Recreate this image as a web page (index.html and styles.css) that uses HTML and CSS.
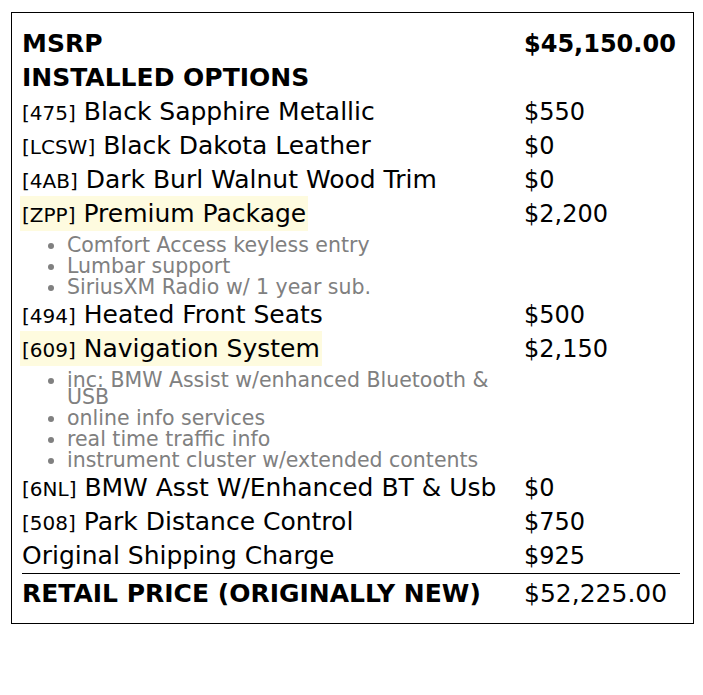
FILE: index.html
```html
<!DOCTYPE html>
<html>
<head>
<meta charset="utf-8">
<link rel="stylesheet" href="styles.css">
</head>
<body>
<div class="sticker">
  <div class="row head"><span class="name">MSRP</span><span class="price">$45,150.00</span></div>
  <div class="row head"><span class="name">INSTALLED OPTIONS</span><span class="price"></span></div>
  <div class="row"><span class="name"><span class="code">[475]</span> Black Sapphire Metallic</span><span class="price">$550</span></div>
  <div class="row"><span class="name"><span class="code">[LCSW]</span> Black Dakota Leather</span><span class="price">$0</span></div>
  <div class="row"><span class="name"><span class="code">[4AB]</span> Dark Burl Walnut Wood Trim</span><span class="price">$0</span></div>
  <div class="row"><span class="name"><span class="hl"><span class="code">[ZPP]</span> Premium Package</span></span><span class="price">$2,200</span></div>
  <ul class="details">
    <li>Comfort Access keyless entry</li>
    <li>Lumbar support</li>
    <li>SiriusXM Radio w/ 1 year sub.</li>
  </ul>
  <div class="row"><span class="name"><span class="code">[494]</span> Heated Front Seats</span><span class="price">$500</span></div>
  <div class="row"><span class="name"><span class="hl"><span class="code">[609]</span> Navigation System</span></span><span class="price">$2,150</span></div>
  <ul class="details">
    <li>inc: BMW Assist w/enhanced Bluetooth &amp; USB</li>
    <li>online info services</li>
    <li>real time traffic info</li>
    <li>instrument cluster w/extended contents</li>
  </ul>
  <div class="row"><span class="name"><span class="code">[6NL]</span> BMW Asst W/Enhanced BT &amp; Usb</span><span class="price">$0</span></div>
  <div class="row"><span class="name"><span class="code">[508]</span> Park Distance Control</span><span class="price">$750</span></div>
  <div class="row"><span class="name">Original Shipping Charge</span><span class="price">$925</span></div>
  <div class="row total"><span class="name">RETAIL PRICE (ORIGINALLY NEW)</span><span class="price">$52,225.00</span></div>
</div>
</body>
</html>
```
FILE: styles.css
```css
html, body {
  margin: 0;
  padding: 0;
  background: #fff;
}
body {
  font-family: "DejaVu Sans", sans-serif;
  color: #000;
}
.sticker {
  margin: 12px 0 0 11px;
  width: 683px;
  height: 612px;
  box-sizing: border-box;
  border: 1px solid #000;
  padding: 14px 13px 0 10px;
}
.row {
  display: grid;
  grid-template-columns: 502px 1fr;
  height: 34px;
  align-items: center;
  line-height: 28px;
}
.name {
  font-size: 25px;
}
.price {
  font-size: 24px;
}
.head {
  font-weight: bold;
}
.code {
  font-size: 20px;
}
.hl {
  background: #fefbdf;
  padding: 3px 2px;
  margin-left: -2px;
}
.details {
  width: 502px;
  box-sizing: border-box;
  margin: 0;
  padding: 4px 0 0 45px;
  color: #808080;
  font-size: 20.5px;
  line-height: 17px;
}
.details li {
  padding: 2px 0;
}
.total {
  border-top: 1px solid #000;
  height: 40px;
  font-weight: bold;
}
.total .price {
  font-weight: normal;
  font-size: 25px;
}
```
